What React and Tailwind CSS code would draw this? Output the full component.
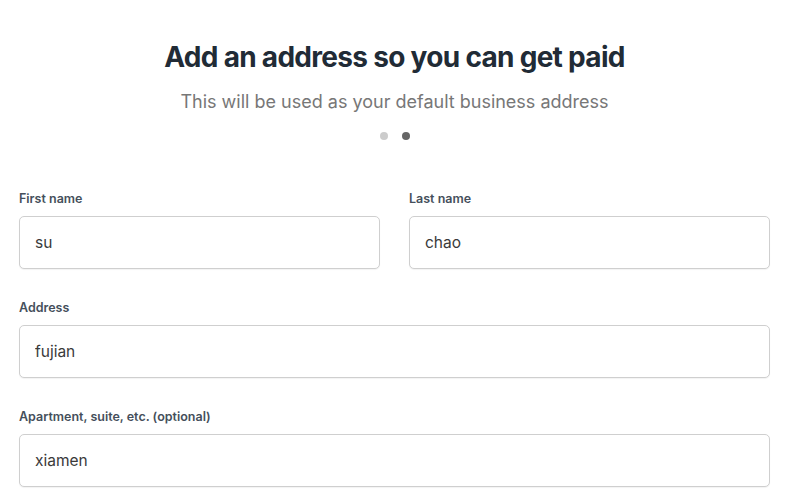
import { useState } from 'react';

function Field({ label, value, onChange }) {
  return (
    <div className="flex flex-col">
      <label className="text-[12.5px] leading-[18px] font-semibold text-[#454f5b] mb-[8px]">{label}</label>
      <input
        value={value}
        onChange={(e) => onChange(e.target.value)}
        className="h-[53px] w-full rounded-[5px] border border-[#cfcfcf] bg-white px-[15px] text-[15.5px] text-[#3a3a3a] shadow-[0_1px_1px_rgba(0,0,0,0.05)] outline-none"
      />
    </div>
  );
}

export default function App() {
  const [form, setForm] = useState({
    firstName: 'su',
    lastName: 'chao',
    address: 'fujian',
    apartment: 'xiamen',
  });

  const set = (key) => (v) => setForm({ ...form, [key]: v });

  return (
    <div className="min-h-screen bg-white px-[19px] pt-[38px]" style={{ fontFamily: 'Inter, "Noto Sans", sans-serif' }}>
      <div className="flex flex-col items-center">
        <h1 className="text-[28px] leading-[38px] font-bold tracking-[-0.7px] text-[#212b36]">
          Add an address so you can get paid
        </h1>
        <p className="mt-[14px] text-[18px] leading-[24px] text-[#777]">
          This will be used as your default business address
        </p>
        <div className="mt-[18px] flex gap-[14px]">
          <span className="h-[8px] w-[8px] rounded-full bg-[#ccc]" />
          <span className="h-[8px] w-[8px] rounded-full bg-[#666]" />
        </div>
      </div>

      <div className="mt-[50px] flex flex-col gap-[30px]">
        <div className="grid grid-cols-2 gap-[29px]">
          <Field label="First name" value={form.firstName} onChange={set('firstName')} />
          <Field label="Last name" value={form.lastName} onChange={set('lastName')} />
        </div>
        <Field label="Address" value={form.address} onChange={set('address')} />
        <Field label="Apartment, suite, etc. (optional)" value={form.apartment} onChange={set('apartment')} />
      </div>
    </div>
  );
}
